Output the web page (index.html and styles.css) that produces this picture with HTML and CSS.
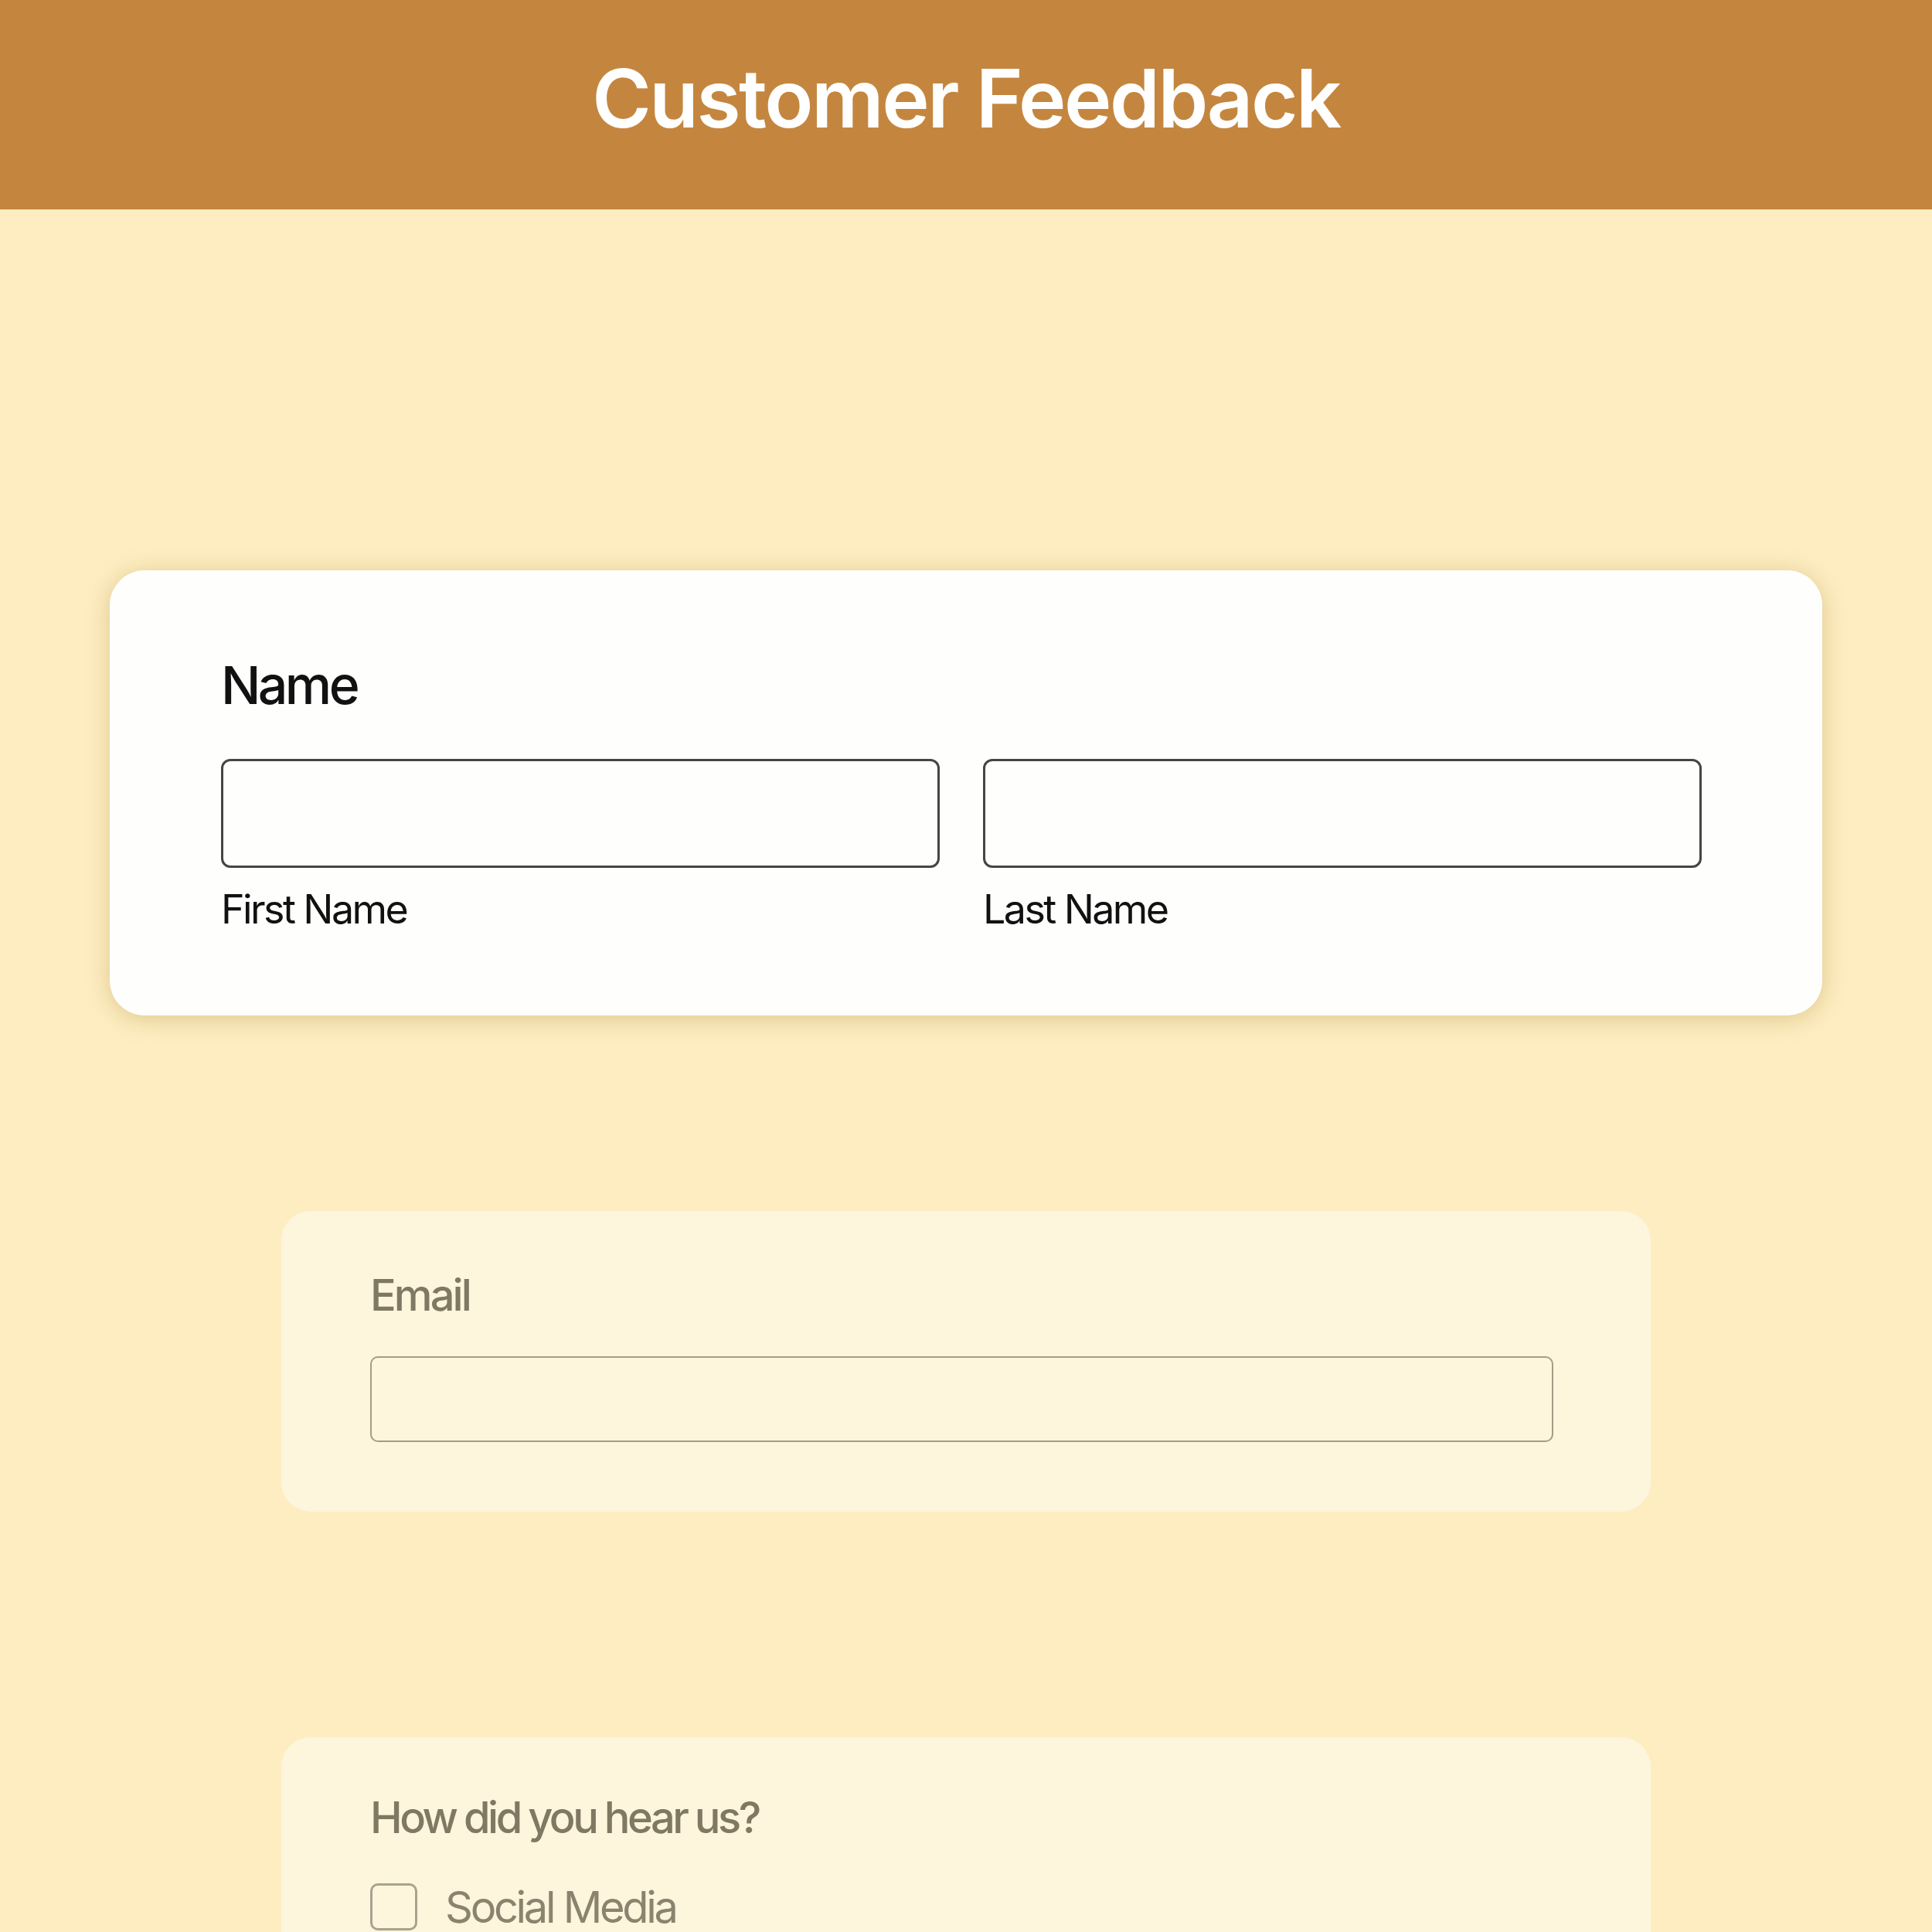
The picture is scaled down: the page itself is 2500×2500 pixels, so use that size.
FILE: index.html
```html
<!DOCTYPE html>
<html lang="en">
<head>
<meta charset="utf-8">
<title>Customer Feedback</title>
<link rel="stylesheet" href="styles.css">
</head>
<body>
<header class="topbar">
  <h1 class="title">Customer Feedback</h1>
</header>
<main class="form">
  <section class="card card-active">
    <div class="q-label">Name</div>
    <div class="name-row">
      <div class="field">
        <div class="input"></div>
        <div class="sub-label">First Name</div>
      </div>
      <div class="field">
        <div class="input"></div>
        <div class="sub-label">Last Name</div>
      </div>
    </div>
  </section>
  <section class="card card-faded card-email">
    <div class="q-label q-faded">Email</div>
    <div class="input input-faded"></div>
  </section>
  <section class="card card-faded card-hear">
    <div class="q-label q-faded q-long">How did you hear us?</div>
    <div class="option">
      <span class="checkbox"></span>
      <span class="option-text">Social Media</span>
    </div>
  </section>
</main>
</body>
</html>
```
FILE: styles.css
```css
html, body {
  margin: 0;
  padding: 0;
}
body {
  background: #fdedc1;
  font-family: Inter, "Noto Sans", sans-serif;
  width: 2500px;
  height: 2500px;
  overflow: hidden;
}
.topbar {
  height: 271px;
  background: #c4863f;
  display: flex;
  align-items: center;
  justify-content: center;
}
.title {
  margin: 0 0 18px 0;
  color: #ffffff;
  font-size: 104px;
  font-weight: 600;
  line-height: 1;
  letter-spacing: -2.5px;
}
.form {
  display: flex;
  flex-direction: column;
  align-items: center;
  padding-top: 467px;
}
.card {
  box-sizing: border-box;
}
.card-active {
  width: 2216px;
  height: 576px;
  background: #fefefd;
  border-radius: 45px;
  box-shadow: 0 4px 30px rgba(175, 140, 60, 0.38);
  padding: 114px 156px 0 144px;
}
.q-label {
  font-size: 68px;
  font-weight: 500;
  line-height: 1;
  color: #111111;
  letter-spacing: -3.6px;
}
.name-row {
  display: flex;
  gap: 56px;
  margin-top: 62px;
}
.field {
  flex: 1;
}
.input {
  box-sizing: border-box;
  height: 141px;
  border: 3px solid #454545;
  border-radius: 12px;
}
.sub-label {
  margin-top: 28px;
  font-size: 52px;
  line-height: 1;
  color: #111111;
  letter-spacing: -2.6px;
}
.card-faded {
  width: 1772px;
  background: #fdf5dc;
  border-radius: 38px;
  padding: 81px 126px 0 115px;
}
.card-email {
  margin-top: 253px;
  height: 389px;
}
.card-hear {
  margin-top: 292px;
  height: 400px;
  padding-top: 76px;
}
.q-faded {
  font-size: 56px;
  color: #7f7863;
  letter-spacing: -2.9px;
}
.q-long {
  letter-spacing: -3.5px;
  word-spacing: -1px;
}
.input-faded {
  margin-top: 51px;
  height: 111px;
  border: 2px solid #a39c88;
  border-radius: 10px;
}
.option {
  display: flex;
  align-items: center;
  gap: 36px;
  margin-top: 57px;
}
.checkbox {
  box-sizing: border-box;
  width: 61px;
  height: 61px;
  border: 3px solid #a9a28e;
  border-radius: 10px;
}
.option-text {
  font-size: 56px;
  line-height: 1;
  color: #8a836e;
  font-weight: 400;
  letter-spacing: -3.3px;
}
```
